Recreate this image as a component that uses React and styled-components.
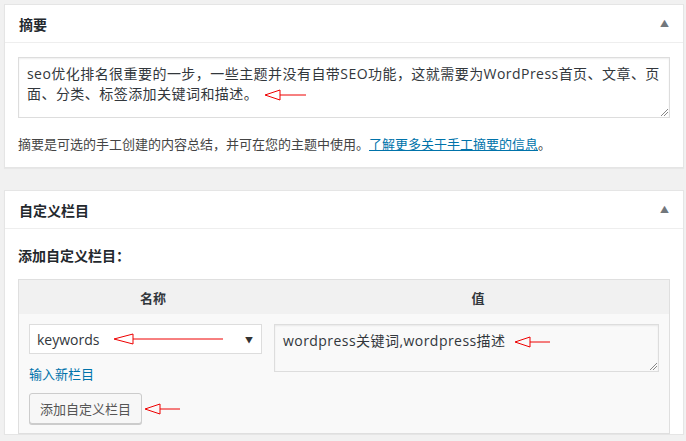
import React from "react"
import styled, { createGlobalStyle } from "styled-components"

const Global = createGlobalStyle`
  body {
    margin: 0;
    background: #f1f1f1;
    font-family: "Open Sans", "Noto Sans CJK SC", sans-serif;
    font-size: 13px;
    color: #32373c;
  }
`

const Page = styled.div`
  padding: 4px 0 0 4px;
  display: flex;
  flex-direction: column;
  gap: 22px;
`

const Panel = styled.div`
  background: #fff;
  border: 1px solid #e5e5e5;
  box-shadow: 0 1px 1px rgba(0, 0, 0, 0.04);
  width: 678px;
`

const PanelHead = styled.div`
  height: 37px;
  border-bottom: 1px solid #eee;
  display: flex;
  align-items: center;
  justify-content: space-between;
  padding: 0 14px;
  font-size: 14px;
  font-weight: 600;
  color: #23282d;
`

const Toggle = styled.span`
  font-size: 9px;
  color: #72777c;
`

const PanelBody = styled.div`
  padding: ${p => p.pad || "14px 13px"};
`

const TextArea = styled.div`
  border: 1px solid #ddd;
  box-shadow: inset 0 1px 2px rgba(0, 0, 0, 0.07);
  height: ${p => p.h}px;
  padding: 6px 8px;
  box-sizing: border-box;
  font-size: 14px;
  line-height: 20px;
  letter-spacing: 0.45px;
  color: #32373c;
  position: relative;
  flex: ${p => p.flex || "none"};
`

const Grip = styled.svg`
  position: absolute;
  right: 1px;
  bottom: 1px;
`

const Help = styled.p`
  margin: 16px 0 0;
  font-size: 13px;
  color: #444;
`

const A = styled.a`
  color: #0073aa;
  text-decoration: ${p => (p.under ? "underline" : "none")};
`

const Label = styled.div`
  font-weight: 600;
  font-size: 14px;
  margin: 3px 0 14px;
  color: #23282d;
`

const Table = styled.div`
  border: 1px solid #dfdfdf;
  background: #f9f9f9;
`

const THead = styled.div`
  display: grid;
  grid-template-columns: 268px 1fr;
  background: #f1f1f1;
  height: 34px;
  align-items: center;
  font-weight: 600;
  font-size: 13px;
  text-align: center;
`

const TBody = styled.div`
  display: flex;
  gap: 12px;
  padding: 10px 10px 9px 10px;
`

const LeftCol = styled.div`
  width: 233px;
  display: flex;
  flex-direction: column;
  align-items: flex-start;
`

const Select = styled.div`
  width: 233px;
  height: 30px;
  box-sizing: border-box;
  border: 1px solid #ddd;
  background: #fff;
  display: flex;
  align-items: center;
  padding: 0 7px;
  font-size: 14px;
  position: relative;
`

const Caret = styled.span`
  position: absolute;
  right: 8px;
  font-size: 8px;
  color: #333;
`

const NewLink = styled(A)`
  margin: 10px 0 10px;
  font-size: 13px;
`

const Button = styled.div`
  border: 1px solid #ccc;
  background: #f7f7f7;
  box-shadow: 0 1px 0 #ccc;
  border-radius: 3px;
  height: 29px;
  padding: 0 10px;
  display: flex;
  align-items: center;
  font-size: 13px;
  color: #555;
`

const Row = styled.div`
  display: flex;
  align-items: center;
`

const Arrow = ({ w = 44, style }) => (
  <svg width={w} height="12" viewBox={`0 0 ${w} 12`} style={style}>
    <polygon points={`1,6 16,1 16,11`} fill="none" stroke="#e00" strokeWidth="1" />
    <line x1="16" y1="6" x2={w} y2="6" stroke="#e00" strokeWidth="1" />
  </svg>
)

const ResizeGrip = () => (
  <Grip width="8" height="8" viewBox="0 0 8 8">
    <line x1="1" y1="8" x2="8" y2="1" stroke="#888" />
    <line x1="4" y1="8" x2="8" y2="4" stroke="#888" />
  </Grip>
)

export default function App() {
  return (
    <>
      <Global />
      <Page>
        <Panel>
          <PanelHead>
            摘要 <Toggle>▲</Toggle>
          </PanelHead>
          <PanelBody>
            <TextArea h={61}>
              seo优化排名很重要的一步，一些主题并没有自带SEO功能，这就需要为WordPress首页、文章、页面、分类、标签添加关键词和描述。
              <Arrow w={42} style={{ marginLeft: 6, verticalAlign: "middle" }} />
              <ResizeGrip />
            </TextArea>
            <Help>
              摘要是可选的手工创建的内容总结，并可在您的主题中使用。
              <A under href="#">了解更多关于手工摘要的信息</A>。
            </Help>
          </PanelBody>
        </Panel>
        <Panel>
          <PanelHead>
            自定义栏目 <Toggle>▲</Toggle>
          </PanelHead>
          <PanelBody pad="13px 13px 0">
            <Label>添加自定义栏目：</Label>
            <Table>
              <THead>
                <span>名称</span>
                <span>值</span>
              </THead>
              <TBody>
                <LeftCol>
                  <Select>
                    keywords
                    <svg width="110" height="12" style={{ marginLeft: 14 }}>
                      <polygon points="1,6 20,1 20,11" fill="none" stroke="#e00" />
                      <line x1="20" y1="6" x2="110" y2="6" stroke="#e00" />
                    </svg>
                    <Caret>▼</Caret>
                  </Select>
                  <NewLink href="#">输入新栏目</NewLink>
                  <Row>
                    <Button>添加自定义栏目</Button>
                    <Arrow w={36} style={{ marginLeft: 2 }} />
                  </Row>
                </LeftCol>
                <TextArea h={48} flex="1">
                  wordpress关键词,wordpress描述
                  <Arrow w={36} style={{ marginLeft: 8, verticalAlign: "middle" }} />
                  <ResizeGrip />
                </TextArea>
              </TBody>
            </Table>
          </PanelBody>
        </Panel>
      </Page>
    </>
  )
}
